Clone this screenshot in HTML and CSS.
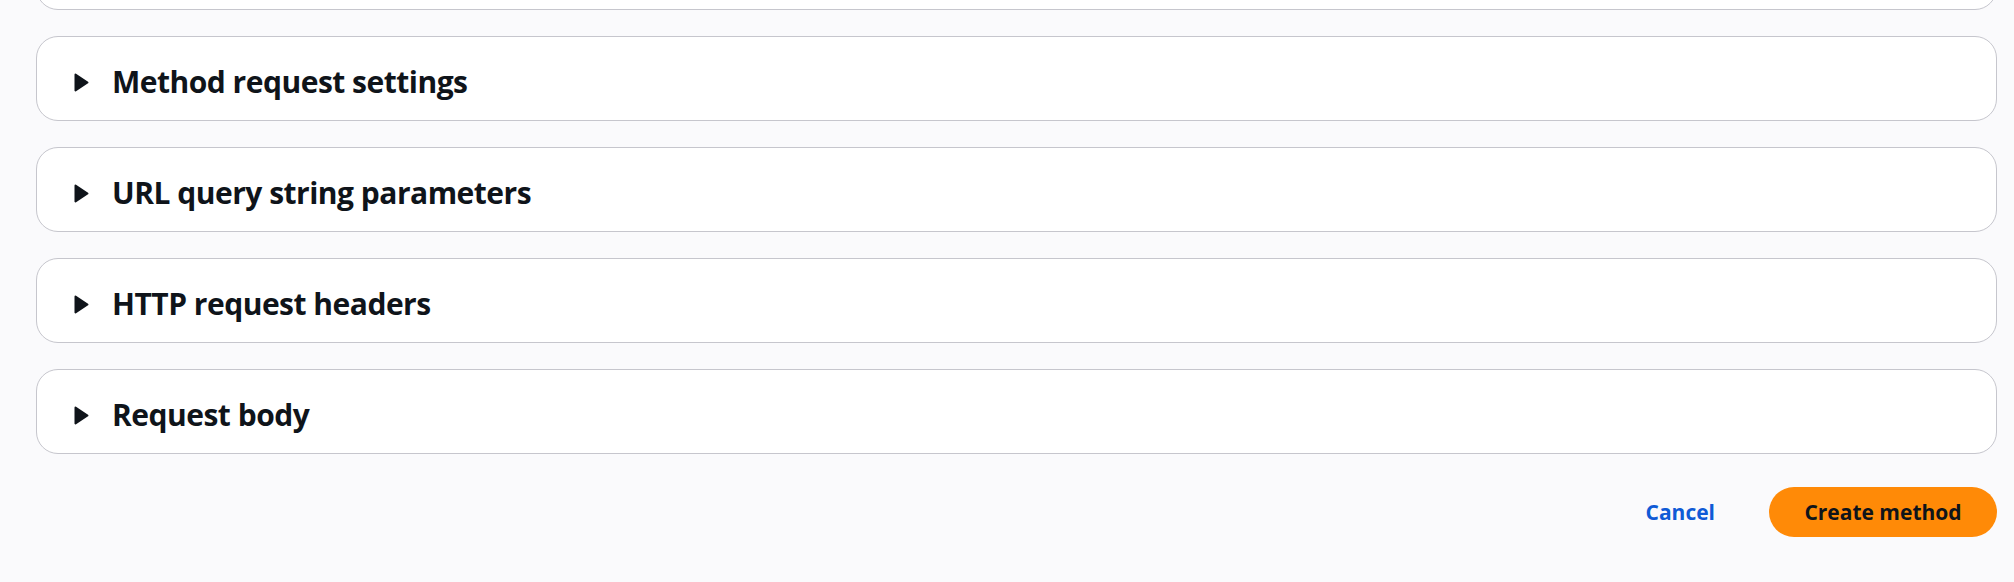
FILE: index.html
```html
<!DOCTYPE html>
<html lang="en">
<head>
<meta charset="utf-8">
<title>Create method</title>
<link rel="stylesheet" href="styles.css">
</head>
<body>
<main class="page">
  <section class="card card-prev" aria-hidden="true"></section>
  <section class="card">
    <div class="card-header">
      <svg class="caret" viewBox="0 0 15 19" aria-hidden="true"><path d="M1.5 1.5 L13.5 9.5 L1.5 17.5 Z"/></svg>
      <h2 class="card-title">Method request settings</h2>
    </div>
  </section>
  <section class="card">
    <div class="card-header">
      <svg class="caret" viewBox="0 0 15 19" aria-hidden="true"><path d="M1.5 1.5 L13.5 9.5 L1.5 17.5 Z"/></svg>
      <h2 class="card-title">URL query string parameters</h2>
    </div>
  </section>
  <section class="card">
    <div class="card-header">
      <svg class="caret" viewBox="0 0 15 19" aria-hidden="true"><path d="M1.5 1.5 L13.5 9.5 L1.5 17.5 Z"/></svg>
      <h2 class="card-title">HTTP request headers</h2>
    </div>
  </section>
  <section class="card">
    <div class="card-header">
      <svg class="caret" viewBox="0 0 15 19" aria-hidden="true"><path d="M1.5 1.5 L13.5 9.5 L1.5 17.5 Z"/></svg>
      <h2 class="card-title">Request body</h2>
    </div>
  </section>
  <div class="actions">
    <button class="btn-link" type="button">Cancel</button>
    <button class="btn-primary" type="button">Create method</button>
  </div>
</main>
</body>
</html>
```
FILE: styles.css
```css
html, body {
  margin: 0;
  padding: 0;
  background: #fafafc;
}
body {
  font-family: "Open Sans", "Noto Sans", "Liberation Sans", sans-serif;
  color: #0f141a;
}
.page {
  display: flex;
  flex-direction: column;
  gap: 26px;
  padding: 0 17px 0 36px;
}
.card {
  box-sizing: border-box;
  height: 85px;
  background: #ffffff;
  border: 1px solid #c6c6cd;
  border-radius: 22px;
  padding: 27px 20px 0 37px;
}
.card-prev {
  margin-top: -75px;
}
.card-header {
  display: flex;
  align-items: center;
  gap: 23px;
  height: 36px;
}
.caret {
  width: 15px;
  height: 19px;
  flex: none;
  fill: #0f141a;
  stroke: #0f141a;
  stroke-width: 2;
  stroke-linejoin: round;
}
.card-title {
  margin: 0;
  font-size: 30px;
  line-height: 36px;
  font-weight: 700;
  letter-spacing: -0.5px;
}
.actions {
  display: flex;
  justify-content: flex-end;
  align-items: center;
  gap: 30px;
  margin-top: 7px;
}
.btn-link {
  background: none;
  border: none;
  padding: 0 24px;
  font-family: inherit;
  font-size: 21px;
  font-weight: 700;
  color: #0f5ad6;
  cursor: pointer;
}
.btn-primary {
  box-sizing: border-box;
  width: 228px;
  height: 50px;
  border: none;
  border-radius: 25px;
  background: #ff8a07;
  color: #0f141a;
  font-family: inherit;
  font-size: 21px;
  font-weight: 700;
  cursor: pointer;
}
```
